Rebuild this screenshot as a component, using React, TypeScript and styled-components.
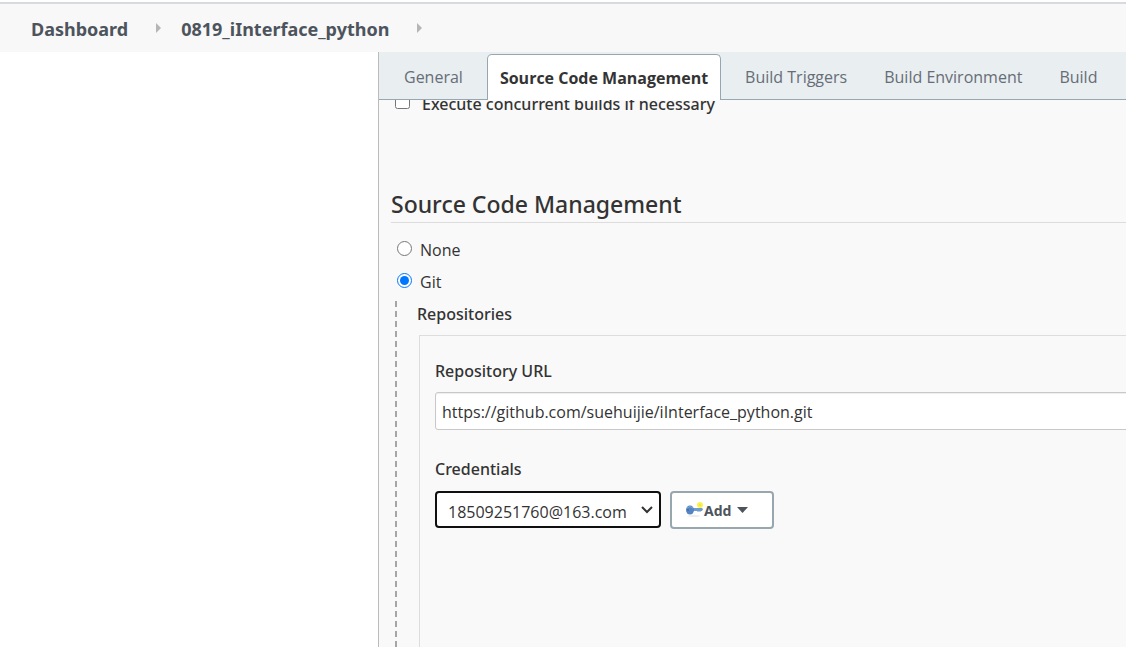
import React from "react";
import styled, { createGlobalStyle } from "styled-components";

const GlobalStyle = createGlobalStyle`
  *, *::before, *::after { box-sizing: border-box; }
  body {
    margin: 0;
    background: #ffffff;
    color: #333333;
    font-family: "Open Sans", "Noto Sans", sans-serif;
    font-size: 16px;
    line-height: 24px;
  }
`;

const Page = styled.div`
  display: flex;
  flex-direction: column;
  min-height: 100vh;
  overflow: hidden;
  padding-top: 2px;
`;

const Breadcrumbs = styled.nav`
  display: flex;
  align-items: center;
  height: 50px;
  padding: 2px 31px 0;
  background: #f8f8f8;
  border-top: 2px solid #d9d9e0;
`;

const Crumb = styled.a`
  color: #4d545d;
  font-family: "Noto Sans", sans-serif;
  font-size: 18px;
  font-weight: 700;
  text-decoration: none;
`;

const CrumbArrow = styled.svg`
  flex: none;
  width: 5px;
  height: 10px;
  margin: 0 20px 2px 28px;
  fill: #b5b5b5;
`;

const Body = styled.div`
  display: grid;
  grid-template-columns: 378px minmax(0, 1fr);
  flex: 1;
`;

const Main = styled.main`
  display: flex;
  flex-direction: column;
  grid-column: 2;
  overflow: hidden;
  background: #f9f9f9;
  border-left: 1px solid #bbbbbb;
`;

const Tabs = styled.div`
  display: flex;
  flex: none;
  gap: 11px;
  height: 48px;
  padding: 2px 12px 0;
  background: #e9eef1;
  border-bottom: 1px solid #98a6b2;
`;

const Tab = styled.button<{ $active?: boolean }>`
  flex: none;
  height: ${(p) => (p.$active ? "46px" : "45px")};
  padding: 0 12px;
  color: ${(p) => (p.$active ? "#333333" : "#666d76")};
  background: ${(p) => (p.$active ? "#ffffff" : "transparent")};
  border: 1px solid ${(p) => (p.$active ? "#98a6b2" : "transparent")};
  border-bottom: 0;
  border-radius: 5px 5px 0 0;
  font-family: inherit;
  font-size: 16px;
  font-weight: ${(p) => (p.$active ? 700 : 400)};
  white-space: nowrap;
`;

const ScrolledRow = styled.div`
  display: flex;
  flex: none;
  align-items: flex-end;
  height: 16px;
  padding-left: 16px;
  overflow: hidden;
`;

const CheckLabel = styled.label`
  display: flex;
  align-items: center;
  gap: 12px;
  font-family: "Noto Sans", sans-serif;
  font-weight: 500;

  input {
    width: 15px;
    height: 15px;
    margin: 0 0 5px;
  }
`;

const Section = styled.section`
  display: flex;
  flex: 1;
  flex-direction: column;
  padding: 72px 0 0 12px;
`;

const SectionTitle = styled.h2`
  margin: 0 0 11px;
  padding-bottom: 1px;
  border-bottom: 1px solid #dddddd;
  font-family: "Noto Sans", sans-serif;
  font-size: 23px;
  font-weight: 500;
  line-height: 33px;
`;

const RadioLabel = styled.label`
  display: flex;
  align-items: center;
  gap: 8px;
  height: 32px;
  padding-left: 6px;

  input {
    width: 15px;
    height: 15px;
    margin: 0 0 3px;
  }
`;

const Nested = styled.div`
  display: flex;
  flex: 1;
  flex-direction: column;
  margin: 3px 0 0 4px;
  padding: 1px 0 0 20px;
  border-left: 2px dashed #a6a6a6;
`;

const GroupTitle = styled.h3`
  margin: 0;
  font-family: "Noto Sans", sans-serif;
  font-size: 16px;
  font-weight: 500;
`;

const Repository = styled.div`
  display: flex;
  flex: 1;
  flex-direction: column;
  margin: 9px 0 0 2px;
  padding: 23px 0 0 15px;
  border: 1px solid #dddddd;
  border-width: 1px 0 0 1px;
`;

const FieldLabel = styled.label`
  font-family: "Noto Sans", sans-serif;
  font-weight: 500;
`;

const UrlInput = styled.input`
  width: calc(100% + 8px);
  height: 38px;
  margin: 9px 0 27px;
  padding: 2px 6px 0;
  color: #333333;
  background: #ffffff;
  border: 1px solid #c8c8c8;
  border-radius: 3px;
  box-shadow: inset 0 1px 1px #eeeeee;
  font: inherit;
`;

const Controls = styled.div`
  display: flex;
  align-items: flex-start;
  gap: 9px;
  margin-top: 10px;
`;

const SelectWrap = styled.div`
  display: grid;
  align-items: center;
  width: 226px;

  > * { grid-area: 1 / 1; }
`;

const Select = styled.select`
  width: 100%;
  height: 37px;
  padding: 4px 24px 0 11px;
  color: #333333;
  background: #ffffff;
  border: 2px solid #101010;
  border-radius: 4px;
  appearance: none;
  font: inherit;
`;

const Chevron = styled.svg`
  justify-self: end;
  width: 12px;
  height: 8px;
  margin-right: 8px;
  fill: none;
  stroke: #333333;
  stroke-width: 2;
  pointer-events: none;
`;

const AddButton = styled.button`
  display: flex;
  align-items: center;
  width: 104px;
  height: 38px;
  padding: 0 14px;
  color: #4d545d;
  background: #ffffff;
  border: 2px solid #98a6ae;
  border-radius: 4px;
  font-family: "Noto Sans", sans-serif;
  font-size: 14px;
  font-weight: 700;
`;

const KeyIcon = styled.svg`
  flex: none;
  width: 18px;
  height: 16px;
`;

const Caret = styled.svg`
  width: 11px;
  height: 6px;
  margin-left: 6px;
  fill: #4d545d;
`;

const tabs = ["General", "Source Code Management", "Build Triggers", "Build Environment", "Build"];

function Arrow() {
  return (
    <CrumbArrow viewBox="0 0 5 10" aria-hidden="true">
      <path d="M0 0L5 5L0 10Z" />
    </CrumbArrow>
  );
}

export default function App() {
  return (
    <Page>
      <GlobalStyle />
      <Breadcrumbs aria-label="Breadcrumb">
        <Crumb href="#">Dashboard</Crumb>
        <Arrow />
        <Crumb href="#">0819_iInterface_python</Crumb>
        <Arrow />
      </Breadcrumbs>
      <Body>
        <Main>
          <Tabs role="tablist">
            {tabs.map((name) => (
              <Tab key={name} role="tab" type="button" $active={name === tabs[1]} aria-selected={name === tabs[1]}>
                {name}
              </Tab>
            ))}
          </Tabs>
          <ScrolledRow>
            <CheckLabel>
              <input type="checkbox" />
              Execute concurrent builds if necessary
            </CheckLabel>
          </ScrolledRow>
          <Section>
            <SectionTitle>Source Code Management</SectionTitle>
            <RadioLabel>
              <input type="radio" name="scm" />
              None
            </RadioLabel>
            <RadioLabel>
              <input type="radio" name="scm" defaultChecked />
              Git
            </RadioLabel>
            <Nested>
              <GroupTitle>Repositories</GroupTitle>
              <Repository>
                <FieldLabel htmlFor="url">Repository URL</FieldLabel>
                <UrlInput id="url" defaultValue="https://github.com/suehuijie/iInterface_python.git" />
                <FieldLabel htmlFor="credentials">Credentials</FieldLabel>
                <Controls>
                  <SelectWrap>
                    <Select id="credentials">
                      <option>18509251760@163.com</option>
                    </Select>
                    <Chevron viewBox="0 0 12 8" aria-hidden="true">
                      <path d="M1 1L6 6L11 1" />
                    </Chevron>
                  </SelectWrap>
                  <AddButton type="button">
                    <KeyIcon viewBox="0 0 18 16" aria-hidden="true">
                      <ellipse cx="8" cy="14" rx="6" ry="1" fill="#ececec" />
                      <path d="M7 6H16L17 7L16 9H15L14 10L13 9L12 10L11 9H7Z" fill="#6f9bcd" />
                      <ellipse cx="4" cy="8" rx="4" ry="4.500" fill="#5585c0" />
                      <path d="M1 6Q4 3 7 6" stroke="#82a8d6" strokeWidth="1" fill="none" />
                      <circle cx="2" cy="8" r="1" fill="#3f6da8" />
                      <circle cx="14" cy="3" r="3" fill="#fbf250" />
                      <circle cx="14" cy="3" r="1" fill="#f0e23c" />
                    </KeyIcon>
                    Add
                    <Caret viewBox="0 0 11 6" aria-hidden="true">
                      <path d="M0 0H11L5.500 6Z" />
                    </Caret>
                  </AddButton>
                </Controls>
              </Repository>
            </Nested>
          </Section>
        </Main>
      </Body>
    </Page>
  );
}
